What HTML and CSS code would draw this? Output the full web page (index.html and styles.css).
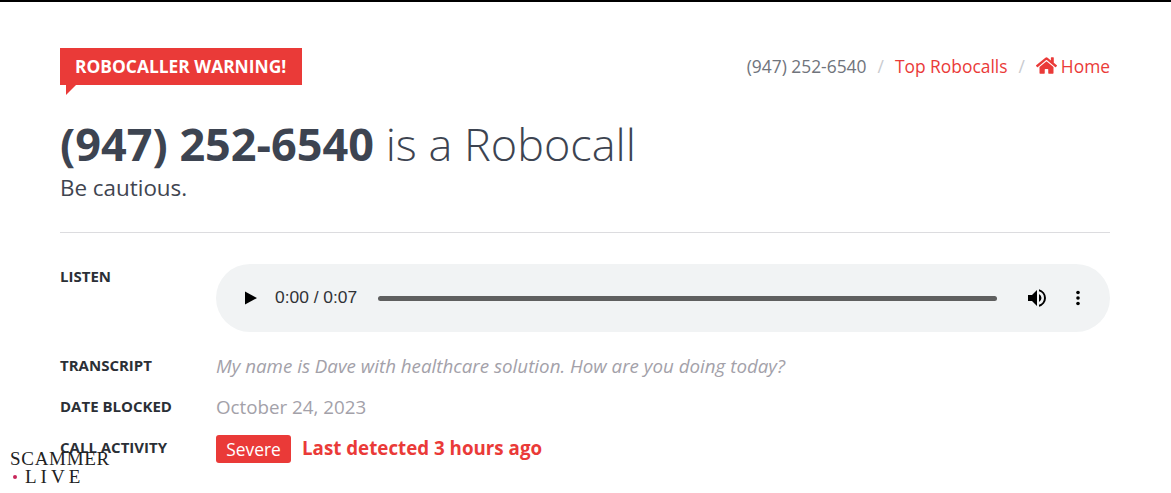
FILE: index.html
```html
<!DOCTYPE html>
<html lang="en">
<head>
    <meta charset="UTF-8">
    <meta name="viewport" content="width=device-width, initial-scale=1.0">
    <title>(947) 252-6540 is a Robocall</title>
    <link rel="stylesheet" href="styles.css">
</head>
<body>
    <div class="container">
        <div class="top-row">
            <div class="badge">ROBOCALLER WARNING!</div>
            <nav class="crumbs">
                <span>(947) 252-6540</span>
                <span class="sep">/</span>
                <a href="#">Top Robocalls</a>
                <span class="sep">/</span>
                <a href="#" class="home">
                    <svg class="home-icon" viewBox="0 0 576 512" aria-hidden="true"><path fill="currentColor" d="M280.4 148.300 96 300.100V464a16 16 0 0 0 16 16l112-.3a16 16 0 0 0 15.900-16V368a16 16 0 0 1 16-16h64a16 16 0 0 1 16 16v95.600a16 16 0 0 0 16 16l112 .4a16 16 0 0 0 16-16V300L295.700 148.300a12.200 12.200 0 0 0-15.300 0zM571.600 251.500 488 182.600V44a12 12 0 0 0-12-12h-56a12 12 0 0 0-12 12v72.600L318.500 43a48 48 0 0 0-61 0L4.300 251.500a12 12 0 0 0-1.600 16.900l25.500 31A12 12 0 0 0 45.200 301l235.200-193.700a12.200 12.200 0 0 1 15.300 0L530.900 301a12 12 0 0 0 16.900-1.600l25.500-31a12 12 0 0 0-1.700-16.900z"/></svg>
                    Home
                </a>
            </nav>
        </div>

        <h1><strong>(947) 252-6540</strong> is a Robocall</h1>
        <p class="subtitle">Be cautious.</p>
        <hr>

        <div class="info-row listen-row">
            <div class="label">Listen</div>
            <div class="player">
                <svg class="play" viewBox="0 0 14 16" aria-hidden="true"><path d="M1 1.500v13l12-6.500z"/></svg>
                <span class="time">0:00 / 0:07</span>
                <div class="track"></div>
                <svg class="volume" viewBox="0 0 24 24" aria-hidden="true"><path d="M3 9v6h4l5 5V4L7 9H3zm13.500 3A4.500 4.500 0 0 0 14 7.970v8.050A4.470 4.470 0 0 0 16.500 12zM14 3.230v2.060a7 7 0 0 1 0 13.420v2.060a9 9 0 0 0 0-17.540z"/></svg>
                <svg class="more" viewBox="0 0 4 16" aria-hidden="true"><circle cx="2" cy="2.500" r="1.800"/><circle cx="2" cy="8" r="1.800"/><circle cx="2" cy="13.500" r="1.800"/></svg>
            </div>
        </div>
        <div class="info-row transcript-row">
            <div class="label">Transcript</div>
            <div class="value"><em>My name is Dave with healthcare solution. How are you doing today?</em></div>
        </div>
        <div class="info-row date-row">
            <div class="label">Date Blocked</div>
            <div class="value">October 24, 2023</div>
        </div>
        <div class="info-row activity-row">
            <div class="label">Call Activity</div>
            <div class="activity">
                <span class="pill">Severe</span>
                <span class="detected">Last detected 3 hours ago</span>
            </div>
        </div>
    </div>

    <div class="watermark">
        <div>SCAMMER</div>
        <div class="wm-second"><span class="dot"></span>LIVE</div>
    </div>
</body>
</html>
```

FILE: styles.css
```css
:root {
    --red: #ea3a38;
    --dark: #3d4451;
    --muted: #a3a1a9;
}

* {
    box-sizing: border-box;
    margin: 0;
    padding: 0;
}

html, body {
    height: 493px;
    overflow: hidden;
}

body {
    font-family: "Open Sans", sans-serif;
    background: #fff;
    color: var(--dark);
    border-top: 2px solid #000;
}

.container {
    padding: 46px 61px 0 60px;
}

.top-row {
    display: flex;
    justify-content: space-between;
    align-items: center;
    height: 37px;
}

.badge {
    position: relative;
    height: 37px;
    line-height: 36px;
    padding: 0 15px 0 15px;
    width: 242px;
    background: var(--red);
    color: #fff;
    font-size: 17.4px;
    font-weight: 700;
}

.badge::after {
    content: "";
    position: absolute;
    left: 6px;
    top: 37px;
    border-top: 10px solid var(--red);
    border-right: 10px solid transparent;
}

.crumbs {
    display: flex;
    align-items: center;
    gap: 11px;
    padding-bottom: 2px;
    font-size: 17.4px;
    color: #70747c;
}

.crumbs a {
    color: var(--red);
    text-decoration: none;
}

.crumbs .sep {
    color: #c9cbcf;
}

.home {
    display: flex;
    align-items: center;
    gap: 4px;
}

.home-icon {
    width: 21px;
    height: 19px;
}

h1 {
    margin-top: 30px;
    font-size: 45px;
    line-height: 57px;
    font-weight: 300;
    color: var(--dark);
}

h1 strong {
    font-weight: 700;
}

.subtitle {
    font-size: 22.4px;
    line-height: 31px;
    color: #3f4550;
}

hr {
    margin-top: 29px;
    border: none;
    border-top: 1px solid #dcdcdf;
}

.info-row {
    display: flex;
}

.label {
    flex: 0 0 156px;
    font-size: 15px;
    font-weight: 700;
    text-transform: uppercase;
    color: #2b2f36;
}

.value {
    font-size: 18.75px;
    color: var(--muted);
}

.listen-row {
    margin-top: 31px;
}

.listen-row .label {
    padding-top: 2px;
}

.player {
    flex: 1;
    display: flex;
    align-items: center;
    height: 68px;
    padding: 0 27px 0 28px;
    border-radius: 34px;
    background: #f1f3f4;
    color: #1b1b1b;
}

.play {
    width: 14px;
    height: 16px;
    margin-top: -1px;
    fill: #000;
}

.time {
    margin-left: 17px;
    margin-top: -2px;
    font-family: "Liberation Sans", sans-serif;
    font-size: 17.4px;
    color: #303236;
}

.track {
    flex: 1;
    height: 5px;
    margin: 0 28px 0 21px;
    border-radius: 3px;
    background: #5f5f5f;
}

.volume {
    width: 24px;
    height: 24px;
    fill: #000;
}

.more {
    width: 4px;
    height: 16px;
    margin-left: 27px;
    margin-right: 3px;
    margin-top: -1px;
    fill: #000;
}

.transcript-row {
    margin-top: 20px;
    line-height: 28px;
}

.date-row {
    margin-top: 13px;
    line-height: 28px;
}

.activity-row {
    margin-top: 14px;
    line-height: 28px;
}

.transcript-row .label,
.date-row .label {
    margin-top: -1px;
}

.activity-row .label {
    margin-top: -2px;
}

.activity {
    display: flex;
    align-items: center;
    gap: 11px;
}

.pill {
    width: 75px;
    height: 28px;
    text-align: center;
    border-radius: 3px;
    background: var(--red);
    color: #fff;
    font-size: 17.4px;
    line-height: 29px;
}

.detected {
    margin-top: -2px;
    color: var(--red);
    font-size: 18.75px;
    font-weight: 700;
}

/* stamp in the corner, sits over the last row */
.watermark {
    position: absolute;
    left: 10px;
    top: 450px;
    font-family: "Liberation Serif", serif;
    font-size: 19px;
    line-height: 18px;
    letter-spacing: 0.7px;
    color: #222;
}

.wm-second {
    display: flex;
    align-items: center;
    letter-spacing: 4px;
}

.dot {
    width: 4px;
    height: 4px;
    margin-left: 3px;
    margin-right: 8px;
    border-radius: 50%;
    background: #c8265a;
}
```
